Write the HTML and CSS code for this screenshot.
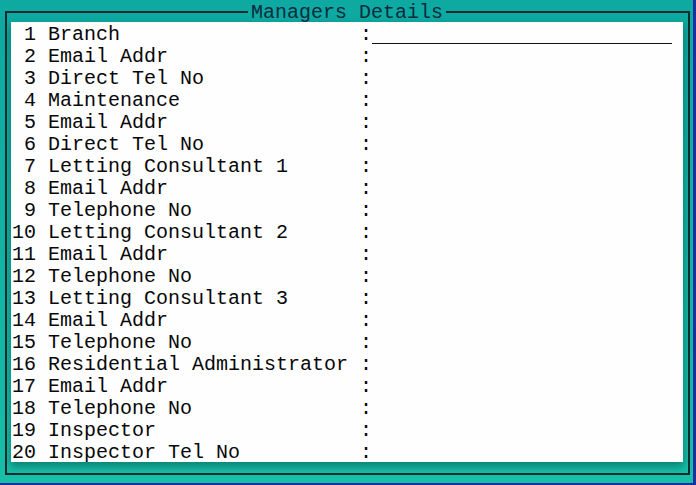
FILE: index.html
```html
<!DOCTYPE html>
<html lang="en">
<head>
<meta charset="utf-8">
<title>Managers Details</title>
<link rel="stylesheet" href="styles.css">
</head>
<body>
<div class="screen">
  <fieldset class="frame">
    <legend class="title">Managers Details</legend>
    <ol class="fields">
      <li class="row"><span class="num">1</span><span class="label">Branch</span><span class="colon">:</span><span class="input"></span></li>
      <li class="row"><span class="num">2</span><span class="label">Email Addr</span><span class="colon">:</span></li>
      <li class="row"><span class="num">3</span><span class="label">Direct Tel No</span><span class="colon">:</span></li>
      <li class="row"><span class="num">4</span><span class="label">Maintenance</span><span class="colon">:</span></li>
      <li class="row"><span class="num">5</span><span class="label">Email Addr</span><span class="colon">:</span></li>
      <li class="row"><span class="num">6</span><span class="label">Direct Tel No</span><span class="colon">:</span></li>
      <li class="row"><span class="num">7</span><span class="label">Letting Consultant 1</span><span class="colon">:</span></li>
      <li class="row"><span class="num">8</span><span class="label">Email Addr</span><span class="colon">:</span></li>
      <li class="row"><span class="num">9</span><span class="label">Telephone No</span><span class="colon">:</span></li>
      <li class="row"><span class="num">10</span><span class="label">Letting Consultant 2</span><span class="colon">:</span></li>
      <li class="row"><span class="num">11</span><span class="label">Email Addr</span><span class="colon">:</span></li>
      <li class="row"><span class="num">12</span><span class="label">Telephone No</span><span class="colon">:</span></li>
      <li class="row"><span class="num">13</span><span class="label">Letting Consultant 3</span><span class="colon">:</span></li>
      <li class="row"><span class="num">14</span><span class="label">Email Addr</span><span class="colon">:</span></li>
      <li class="row"><span class="num">15</span><span class="label">Telephone No</span><span class="colon">:</span></li>
      <li class="row"><span class="num">16</span><span class="label">Residential Administrator</span><span class="colon">:</span></li>
      <li class="row"><span class="num">17</span><span class="label">Email Addr</span><span class="colon">:</span></li>
      <li class="row"><span class="num">18</span><span class="label">Telephone No</span><span class="colon">:</span></li>
      <li class="row"><span class="num">19</span><span class="label">Inspector</span><span class="colon">:</span></li>
      <li class="row"><span class="num">20</span><span class="label">Inspector Tel No</span><span class="colon">:</span></li>
    </ol>
  </fieldset>
</div>
</body>
</html>
```
FILE: styles.css
```css
html, body {
  margin: 0;
  padding: 0;
}
body {
  width: 696px;
  height: 485px;
  overflow: hidden;
  font-family: "Liberation Mono", "Courier New", monospace;
  font-size: 20px;
}
.screen {
  box-sizing: border-box;
  width: 696px;
  height: 485px;
  background: linear-gradient(#0eaaa2, #18c0a8);
  border-right: 3px solid #1c2ea0;
  border-bottom: 2px solid #1c2ea0;
}
.frame {
  box-sizing: border-box;
  width: 685px;
  height: 475px;
  margin: 0 0 0 5px;
  padding: 0 5px 11px 4px;
  border: 2px solid #0b2c2e;
  min-width: 0;
}
.title {
  margin: 0 auto;
  padding: 2px 3px 0;
  line-height: 22px;
  color: #0a2a40;
}
.fields {
  list-style: none;
  margin: -2px 0 0;
  padding: 2px 0 0 1px;
  width: 672px;
  height: 440px;
  box-sizing: border-box;
  background: #fefefe;
  box-shadow: 0 4px 8px 1px rgba(0, 70, 70, 0.5);
  color: #080808;
}
.row {
  display: grid;
  grid-template-columns: 2ch 27ch 1ch 25ch;
  height: 22px;
  line-height: 22px;
  white-space: pre;
}
.num {
  text-align: right;
}
.label {
  padding-left: 1ch;
}
.input {
  height: 19px;
  border-bottom: 1px solid #111;
}
```
